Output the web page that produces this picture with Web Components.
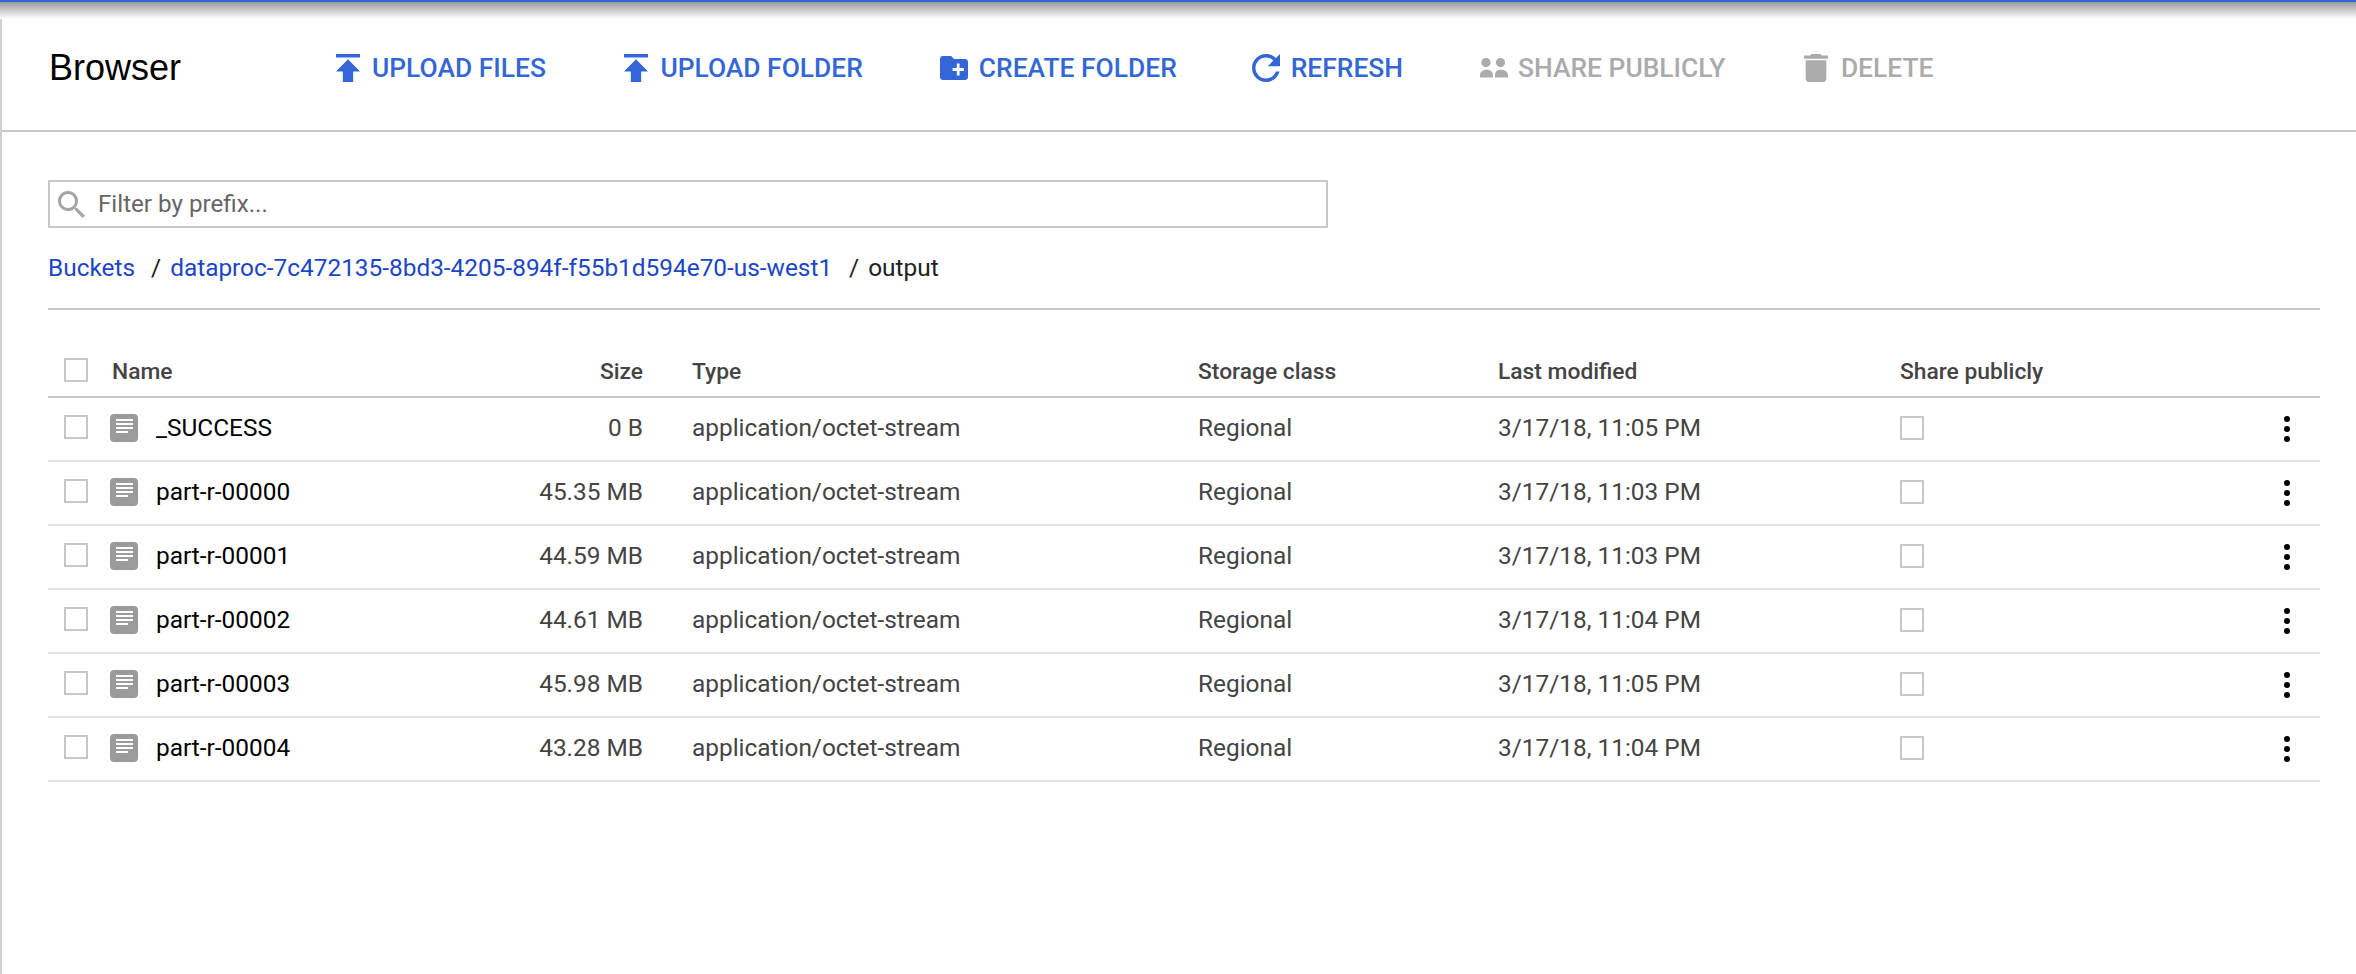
<!DOCTYPE html>
<html>
<head>
<meta charset="utf-8">
<title>Browser</title>
<style>
  html, body { margin: 0; height: 100%; background: #fff; }
  body { font-family: Roboto, "Liberation Sans", sans-serif; overflow: hidden; }
</style>
</head>
<body>
<storage-page></storage-page>

<script>
// material icons, cropped to their ink so the sizes below are the real drawn size
const ICONS = {
  publish: ['5 4 14 16', 'M5 4v2h14V4H5zm0 10h4v6h6v-6h4l-7-7-7 7z'],
  folder: ['2 4 20 16', 'M20 6h-8l-2-2H4c-1.11 0-1.99.89-1.99 2L2 18c0 1.11.89 2 2 2h16c1.11 0 2-.89 2-2V8c0-1.11-.89-2-2-2zm-1 8h-3v3h-2v-3h-3v-2h3V9h2v3h3v2z'],
  refresh: ['4 4 16 16', 'M17.65 6.35C16.2 4.9 14.21 4 12 4c-4.42 0-7.99 3.58-7.99 8s3.57 8 7.99 8c3.73 0 6.84-2.55 7.73-6h-2.08c-.82 2.33-3.04 4-5.65 4-3.31 0-6-2.69-6-6s2.69-6 6-6c1.66 0 3.14.69 4.22 1.78L13 11h7V4l-2.35 2.35z'],
  // two heads and two cut off shoulders, the stock "group" icon is too tall here
  people: ['0 0 28 20', 'M6 0a4.6 4.6 0 1 1 0 9.2a4.6 4.6 0 1 1 0-9.2zM20.5 0a4.6 4.6 0 1 1 0 9.2a4.6 4.6 0 1 1 0-9.2zM0 19.5v-2.5c0-3.4 3.4-5.2 6.5-5.2s6.5 1.800 6.500 5.200v2.500zM15 19.500v-2.500c0-3.400 2.500-5.200 5.800-5.200s7.200 1.800 7.200 5.200v2.500z'],
  trash: ['5 3 14 18', 'M6 19c0 1.1.9 2 2 2h8c1.1 0 2-.9 2-2V7H6v12zM19 4h-3.5l-1-1h-5l-1 1H5v2h14V4z'],
  search: ['3 3 17.5 17.5', 'M15.5 14h-.79l-.28-.27C15.41 12.59 16 11.11 16 9.5 16 5.91 13.09 3 9.5 3S3 5.91 3 9.5 5.91 16 9.5 16c1.61 0 3.09-.59 4.23-1.57l.27.28v.79l5 4.99L20.49 19l-4.99-5zm-6 0C7.01 14 5 11.99 5 9.5S7.01 5 9.5 5 14 7.01 14 9.5 11.99 14 9.5 14z']
}

function iconSvg (name, w, h) {
  const [box, d] = ICONS[name]
  return `<svg width="${w}" height="${h}" viewBox="${box}" preserveAspectRatio="none" fill="currentColor"><path d="${d}"/></svg>`
}

class ToolButton extends HTMLElement {
  connectedCallback () {
    const off = this.hasAttribute('disabled')
    const w = this.getAttribute('w')
    const h = this.getAttribute('h')
    this.attachShadow({ mode: 'open' }).innerHTML = `
    <style>
      :host {
        display: inline-flex;
        align-items: center;
        gap: ${this.getAttribute('gap') || 12}px;
        margin-right: ${this.getAttribute('after') || 0}px;
        height: 28px;
        font-size: 26.4px;
        font-weight: 500;
        color: ${off ? '#ababab' : '#3367d6'};
        white-space: nowrap;
      }
      svg { display: block; flex: none; }
    </style>
    ${iconSvg(this.getAttribute('icon'), w, h)}<slot></slot>`
  }
}
customElements.define('tool-button', ToolButton)

class ToolBar extends HTMLElement {
  constructor () {
    super()
    this.attachShadow({ mode: 'open' }).innerHTML = `
    <style>
      :host {
        display: flex;
        align-items: center;
        box-sizing: border-box;
        height: 130px;
        padding: 5px 0 0 47px;
      }
      h1 {
        margin: 0;
        width: 287px;
        font-family: "Liberation Sans", Arial, sans-serif;
        font-size: 36px;
        font-weight: 400;
        color: #000;
      }
      div { display: flex; align-items: center; gap: 77px; }
    </style>
    <h1>Browser</h1>
    <div><slot></slot></div>`
  }
}
customElements.define('tool-bar', ToolBar)

class FilterBox extends HTMLElement {
  constructor () {
    super()
    this.attachShadow({ mode: 'open' }).innerHTML = `
    <style>
      :host {
        display: flex;
        align-items: center;
        gap: 13px;
        box-sizing: border-box;
        width: 1280px;
        height: 48px;
        padding-left: 8px;
        border: 2px solid #c8c8c8;
        font-size: 24.2px;
        color: #666;
      }
      svg { color: #a6a6a6; }
    </style>
    ${iconSvg('search', 27, 27)}<span>Filter by prefix...</span>`
  }
}
customElements.define('filter-box', FilterBox)

class CrumbTrail extends HTMLElement {
  constructor () {
    super()
    this.attachShadow({ mode: 'open' }).innerHTML = `
    <style>
      :host {
        display: flex;
        box-sizing: border-box;
        height: 82px;
        padding-bottom: 2px;
        align-items: center;
        font-size: 24.4px;
        color: #212121;
        border-bottom: 2px solid #c8c8c8;
      }
      a { color: #1c46c8; text-decoration: none; }
      i { font-style: normal; margin: 0 9px 0 16px; }
      a + i + a + i { margin-left: 17px; }
    </style>
    <a>Buckets</a><i>/</i><a>dataproc-7c472135-8bd3-4205-894f-f55b1d594e70-us-west1</a><i>/</i><span>output</span>`
  }
}
customElements.define('crumb-trail', CrumbTrail)

class CheckBox extends HTMLElement {
  constructor () {
    super()
    this.attachShadow({ mode: 'open' }).innerHTML = `
    <style>
      :host {
        display: block;
        box-sizing: border-box;
        width: 24px;
        height: 24px;
        border: 2px solid #c8c8c8;
      }
    </style>`
  }
}
customElements.define('check-box', CheckBox)

const COLUMNS = 'grid-template-columns: 64px 379px 152px 49px 506px 300px 402px 1fr;'

class TableHead extends HTMLElement {
  constructor () {
    super()
    this.attachShadow({ mode: 'open' }).innerHTML = `
    <style>
      :host {
        display: grid;
        ${COLUMNS}
        align-items: center;
        height: 88px;
        padding-top: 34px;
        box-sizing: border-box;
        border-bottom: 2px solid #c8c8c8;
        font-size: 22.8px;
        font-weight: 500;
        color: #444;
      }
      check-box { margin-left: 16px; }
      span { padding-top: 3px; }
      .size { text-align: right; }
    </style>
    <check-box></check-box>
    <span>Name</span>
    <span class="size">Size</span>
    <span></span>
    <span>Type</span>
    <span>Storage class</span>
    <span>Last modified</span>
    <span>Share publicly</span>`
  }
}
customElements.define('table-head', TableHead)

class FileRow extends HTMLElement {
  connectedCallback () {
    const a = (n) => this.getAttribute(n)
    this.attachShadow({ mode: 'open' }).innerHTML = `
    <style>
      :host {
        display: grid;
        ${COLUMNS}
        align-items: center;
        box-sizing: border-box;
        height: 64px;
        border-bottom: 2px solid #e4e4e4;
        font-size: 24.4px;
        color: #444;
      }
      check-box { margin: -4px 0 0 16px; }
      span { padding-bottom: 3px; }
      .name { display: flex; align-items: center; gap: 18px; color: #000; margin-left: -2px; }
      .size { text-align: right; }
      .more { display: flex; justify-content: space-between; align-items: center; padding: 0 30px 0 0; }
      svg { display: block; }
    </style>
    <check-box></check-box>
    <span class="name">
      <svg width="28" height="28" viewBox="0 0 28 28">
        <rect width="28" height="28" rx="4" fill="#9b9b9b"/>
        <path d="M6 6h17M6 10h17M6 14h17M6 18h12" stroke="#fff" stroke-width="2"/>
      </svg>
      ${a('name')}
    </span>
    <span class="size">${a('size')}</span>
    <span></span>
    <span>application/octet-stream</span>
    <span>Regional</span>
    <span>${a('date')}</span>
    <span class="more">
      <check-box style="margin:-2px 0 0"></check-box>
      <svg width="6" height="26" viewBox="0 0 6 26" fill="#000">
        <circle cx="3" cy="3" r="3"/><circle cx="3" cy="13" r="3"/><circle cx="3" cy="23" r="3"/>
      </svg>
    </span>`
  }
}
customElements.define('file-row', FileRow)

class StoragePage extends HTMLElement {
  constructor () {
    super()
    const rows = [
      ['_SUCCESS', '0 B', '3/17/18, 11:05 PM'],
      ['part-r-00000', '45.35 MB', '3/17/18, 11:03 PM'],
      ['part-r-00001', '44.59 MB', '3/17/18, 11:03 PM'],
      ['part-r-00002', '44.61 MB', '3/17/18, 11:04 PM'],
      ['part-r-00003', '45.98 MB', '3/17/18, 11:05 PM'],
      ['part-r-00004', '43.28 MB', '3/17/18, 11:04 PM']
    ]
    this.attachShadow({ mode: 'open' }).innerHTML = `
    <style>
      :host {
        display: block;
        position: relative;
        box-sizing: border-box;
        height: 974px;
        border-left: 2px solid #d0d0d0;
      }
      .topline {
        position: absolute;
        left: -2px; right: 0; top: 0;
        height: 19px;
        border-top: 2px solid #3367d6;
        box-sizing: border-box;
        background: linear-gradient(#9a9a9a, #fff);
      }
      tool-bar { border-bottom: 2px solid #c8c8c8; height: 132px; }
      main { padding: 48px 36px 0 46px; }
    </style>
    <div class="topline"></div>
    <tool-bar>
      <tool-button icon="publish" w="24" h="28" after="1.5">UPLOAD FILES</tool-button>
      <tool-button icon="publish" w="24" h="28">UPLOAD FOLDER</tool-button>
      <tool-button icon="folder" w="28" h="24" gap="11" after="-2">CREATE FOLDER</tool-button>
      <tool-button icon="refresh" w="28" h="28" gap="11">REFRESH</tool-button>
      <tool-button icon="people" w="28" h="20" gap="10" after="1.5" disabled>SHARE PUBLICLY</tool-button>
      <tool-button icon="trash" w="24" h="28" gap="13" disabled>DELETE</tool-button>
    </tool-bar>
    <main>
      <filter-box></filter-box>
      <crumb-trail></crumb-trail>
      <table-head></table-head>
      ${rows.map(r => `<file-row name="${r[0]}" size="${r[1]}" date="${r[2]}"></file-row>`).join('')}
    </main>`
  }
}
customElements.define('storage-page', StoragePage)
</script>
</body>
</html>
